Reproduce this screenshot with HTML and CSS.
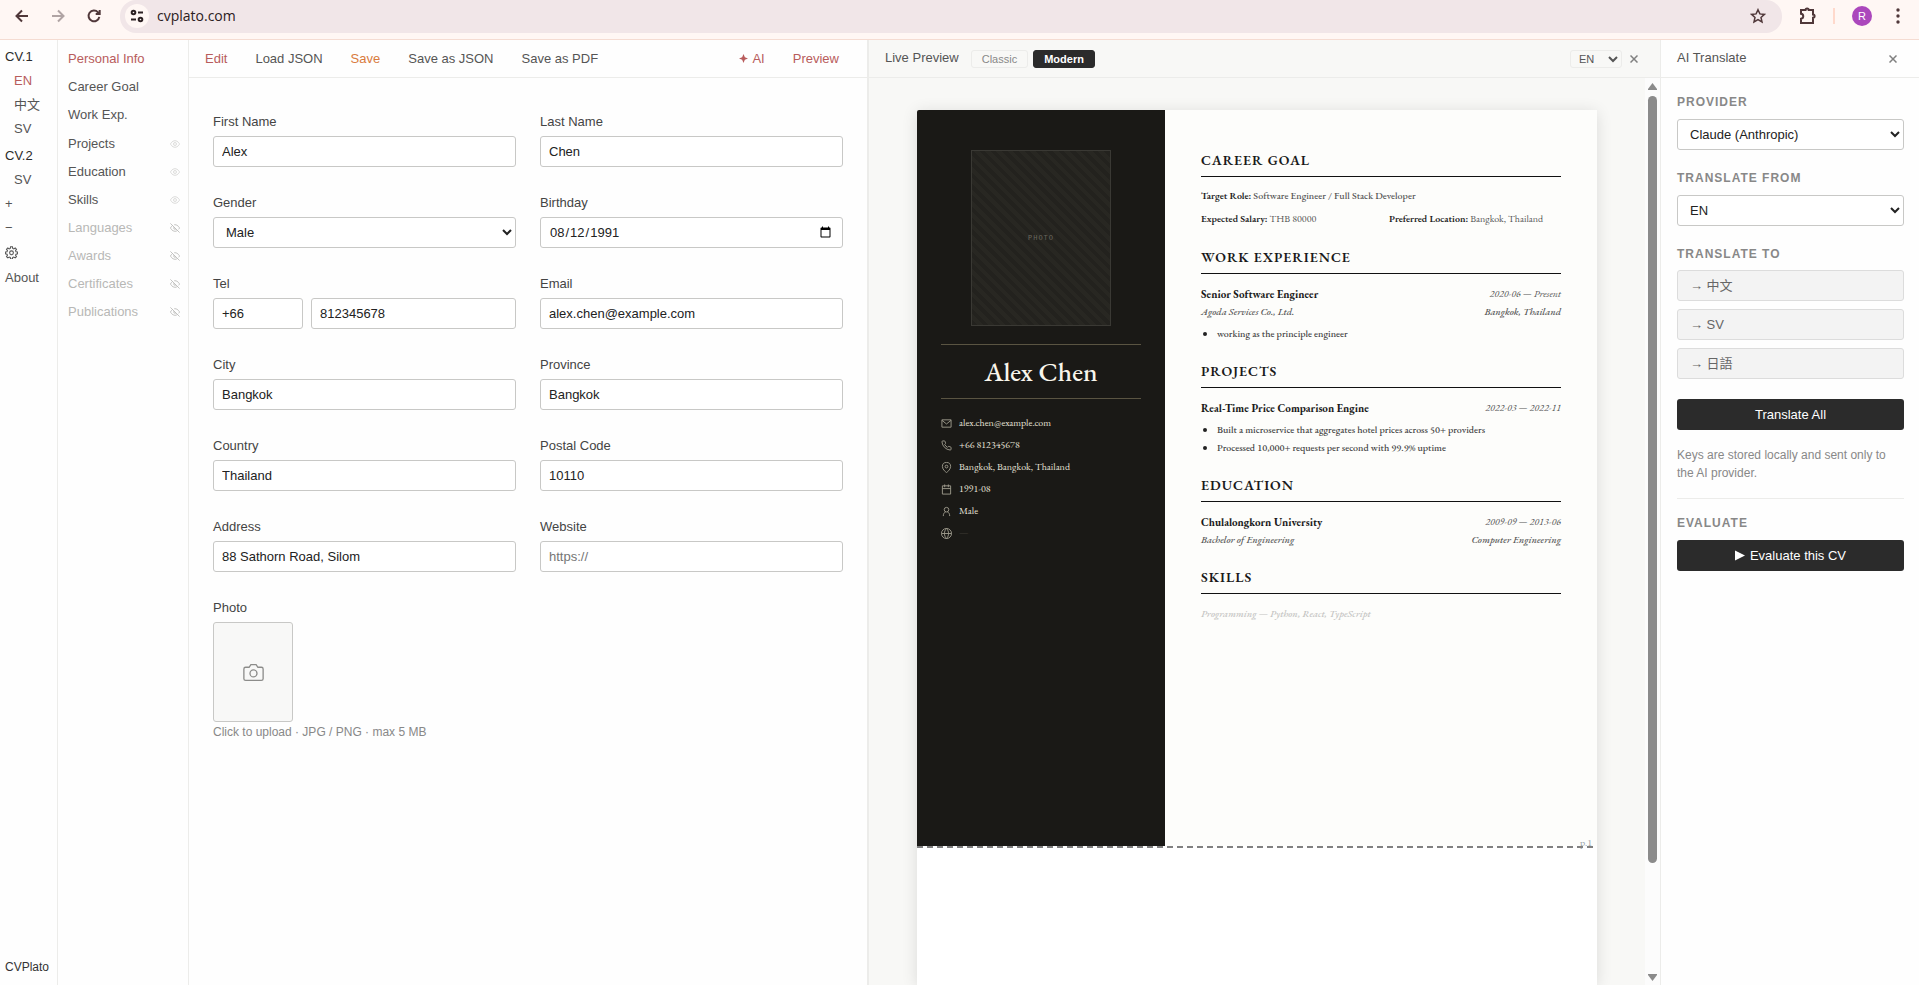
FILE: index.html
```html
<!DOCTYPE html>
<html lang="en">
<head>
<meta charset="utf-8">
<title>CVPlato</title>
<link rel="stylesheet" href="styles.css">
</head>
<body>
<svg width="0" height="0" class="defs" aria-hidden="true">
  <symbol id="eye" viewBox="0 0 24 24"><path d="M1 12s4-8 11-8 11 8 11 8-4 8-11 8S1 12 1 12z"/><circle cx="12" cy="12" r="3.5"/></symbol>
  <symbol id="eye-off" viewBox="0 0 24 24"><path d="M9.900 4.240A9.100 9.100 0 0 1 12 4c7 0 11 8 11 8a18.500 18.500 0 0 1-2.160 3.190M6.060 6.060A18.450 18.450 0 0 0 1 12s4 8 11 8a10.900 10.900 0 0 0 5.940-2.060M9.880 9.880a3 3 0 1 0 4.240 4.240M1 1l22 22"/></symbol>
</svg>

<header class="browser">
  <button class="nav-btn" aria-label="Back"><svg viewBox="0 0 16 16"><path d="M14 8H3M8 2.500 2.500 8 8 13.500"/></svg></button>
  <button class="nav-btn faded" aria-label="Forward"><svg viewBox="0 0 16 16"><path d="M2 8h11M8 2.500 13.500 8 8 13.500"/></svg></button>
  <button class="nav-btn" aria-label="Reload"><svg viewBox="0 0 16 16"><path d="M13.300 8.800A5.400 5.400 0 1 1 12 4.300l1.500 1.500M13.700 2v4h-4"/></svg></button>
  <div class="url-bar">
    <span class="site-info"><svg viewBox="0 0 16 16"><circle cx="4.500" cy="4.500" r="1.800"/><path d="M9 4.500h5M2 11.500h5"/><circle cx="11.500" cy="11.500" r="1.800"/></svg></span>
    <span class="url">cvplato.com</span>
    <svg class="star" viewBox="0 0 16 16"><path d="M8 1.700l1.900 4.200 4.500.500-3.400 3 1 4.500L8 11.600 4 13.900l1-4.500-3.400-3 4.500-.500z"/></svg>
  </div>
  <svg class="puzzle" viewBox="0 0 18 18"><path d="M2 3h4.500a1.600 1.600 0 0 1 3.200 0H14v4.500a1.600 1.600 0 0 1 0 3.200V16H2v-4.200c3-.500 3-4.600 0-5z"/></svg>
  <span class="sep"></span>
  <span class="avatar">R</span>
  <svg class="dots" viewBox="0 0 4 16"><circle cx="2" cy="2" r="1.700"/><circle cx="2" cy="8" r="1.700"/><circle cx="2" cy="14" r="1.700"/></svg>
</header>

<div class="app">
  <nav class="rail">
    <button class="cv">CV.1</button>
    <button class="lang active">EN</button>
    <button class="lang">中文</button>
    <button class="lang">SV</button>
    <button class="cv next">CV.2</button>
    <button class="lang">SV</button>
    <button>+</button>
    <button>−</button>
    <button aria-label="Settings"><svg class="gear" viewBox="0 0 24 24"><path d="M10.300 1.500h3.400l.6 3 1.900.8 2.600-1.700 2.400 2.400-1.700 2.600.8 1.900 3 .6v3.400l-3 .6-.8 1.900 1.700 2.600-2.400 2.400-2.600-1.700-1.900.8-.6 3h-3.400l-.6-3-1.900-.8-2.600 1.700-2.400-2.400 1.700-2.600-.8-1.900-3-.6v-3.400l3-.6.8-1.900-1.700-2.600 2.400-2.400 2.600 1.700 1.900-.8z"/><circle cx="12" cy="12.500" r="3.500"/></svg></button>
    <a href="#about" class="about">About</a>
    <span class="brand">CVPlato</span>
  </nav>

  <nav class="sections">
    <ul>
      <li class="active"><a href="#personal">Personal Info</a></li>
      <li><a href="#goal">Career Goal</a></li>
      <li><a href="#work">Work Exp.</a></li>
    </ul>
    <ul>
      <li><a href="#projects">Projects</a><svg><use href="#eye"/></svg></li>
      <li><a href="#education">Education</a><svg><use href="#eye"/></svg></li>
      <li><a href="#skills">Skills</a><svg><use href="#eye"/></svg></li>
      <li class="off"><a href="#languages">Languages</a><svg><use href="#eye-off"/></svg></li>
      <li class="off"><a href="#awards">Awards</a><svg><use href="#eye-off"/></svg></li>
      <li class="off"><a href="#certificates">Certificates</a><svg><use href="#eye-off"/></svg></li>
      <li class="off"><a href="#publications">Publications</a><svg><use href="#eye-off"/></svg></li>
    </ul>
  </nav>

  <main class="editor">
    <div class="toolbar">
      <button class="accent">Edit</button>
      <button>Load JSON</button>
      <button class="save">Save</button>
      <button>Save as JSON</button>
      <button>Save as PDF</button>
      <button class="accent ai"><svg viewBox="0 0 10 10"><path d="M5 0l1.500 3.500L10 5 6.500 6.500 5 10 3.500 6.500 0 5l3.500-1.500z"/></svg>AI</button>
      <button class="accent">Preview</button>
    </div>
    <form class="form">
      <div class="field"><label for="first">First Name</label><input id="first" type="text" value="Alex"></div>
      <div class="field"><label for="last">Last Name</label><input id="last" type="text" value="Chen"></div>
      <div class="field"><label for="gender">Gender</label><select id="gender"><option>Male</option></select></div>
      <div class="field"><label for="birthday">Birthday</label><input id="birthday" type="date" value="1991-08-12"></div>
      <div class="field"><label for="tel">Tel</label><div class="tel"><input type="text" class="code" aria-label="Country code" value="+66"><input id="tel" type="text" value="812345678"></div></div>
      <div class="field"><label for="email">Email</label><input id="email" type="text" value="alex.chen@example.com"></div>
      <div class="field"><label for="city">City</label><input id="city" type="text" value="Bangkok"></div>
      <div class="field"><label for="province">Province</label><input id="province" type="text" value="Bangkok"></div>
      <div class="field"><label for="country">Country</label><input id="country" type="text" value="Thailand"></div>
      <div class="field"><label for="postal">Postal Code</label><input id="postal" type="text" value="10110"></div>
      <div class="field"><label for="address">Address</label><input id="address" type="text" value="88 Sathorn Road, Silom"></div>
      <div class="field"><label for="website">Website</label><input id="website" type="text" placeholder="https://"></div>
      <div class="field"><label for="photo">Photo</label>
        <button type="button" id="photo" class="upload" aria-label="Upload photo"><svg viewBox="0 0 24 24"><path d="M23 19a2 2 0 0 1-2 2H3a2 2 0 0 1-2-2V8a2 2 0 0 1 2-2h4l2-3h6l2 3h4a2 2 0 0 1 2 2z"/><circle cx="12" cy="13" r="4"/></svg></button>
        <span class="hint">Click to upload · JPG / PNG · max 5 MB</span>
      </div>
    </form>
  </main>

  <section class="preview">
    <div class="panel-head">
      <span class="title">Live Preview</span>
      <button class="theme">Classic</button>
      <button class="theme on">Modern</button>
      <select class="mini" aria-label="Preview language"><option>EN</option></select>
      <button class="close" aria-label="Close preview"><svg viewBox="0 0 8 8"><path d="M.5.5l7 7M7.500.5l-7 7"/></svg></button>
    </div>
    <div class="stage">
      <div class="canvas">
        <article class="paper">
          <div class="page">
            <aside class="cv-side">
              <div class="photo">PHOTO</div>
              <h1>Alex Chen</h1>
              <ul class="contacts">
                <li><svg viewBox="0 0 24 24"><path d="M2 4h20v16H2zM2 5l10 8L22 5"/></svg>alex.chen@example.com</li>
                <li><svg viewBox="0 0 24 24"><path d="M22 16.900v3a2 2 0 0 1-2.200 2A19.800 19.800 0 0 1 2.100 4.200 2 2 0 0 1 4.100 2h3a2 2 0 0 1 2 1.700c.1 1 .4 1.900.7 2.800a2 2 0 0 1-.5 2.100L8.100 9.900a16 16 0 0 0 6 6l1.300-1.300a2 2 0 0 1 2.100-.4c.9.300 1.800.6 2.800.7a2 2 0 0 1 1.700 2z"/></svg>+66 812345678</li>
                <li><svg viewBox="0 0 24 24"><path d="M21 10c0 7-9 13-9 13s-9-6-9-13a9 9 0 0 1 18 0z"/><circle cx="12" cy="10" r="3"/></svg>Bangkok, Bangkok, Thailand</li>
                <li><svg viewBox="0 0 24 24"><path d="M3 4h18v18H3zM3 10h18M8 1v6M16 1v6"/></svg>1991-08</li>
                <li><svg viewBox="0 0 24 24"><circle cx="12" cy="8" r="5"/><path d="M5 22c0-5 2-8 5-9M19 22c0-5-2-8-5-9"/></svg>Male</li>
                <li class="empty"><svg viewBox="0 0 24 24"><circle cx="12" cy="12" r="11"/><path d="M1 12h22M12 1c6 6 6 16 0 22M12 1c-6 6-6 16 0 22"/></svg>—</li>
              </ul>
            </aside>
            <div class="cv-main">
              <section class="block">
                <h2>Career Goal</h2>
                <p class="goal"><b>Target Role:</b> Software Engineer / Full Stack Developer</p>
                <div class="pair"><span><b>Expected Salary:</b> THB 80000</span><span><b>Preferred Location:</b> Bangkok, Thailand</span></div>
              </section>
              <section class="block">
                <h2>Work Experience</h2>
                <div class="row"><h3>Senior Software Engineer</h3><em class="date">2020-06 — Present</em></div>
                <div class="row"><em>Agoda Services Co., Ltd.</em><em>Bangkok, Thailand</em></div>
                <ul><li>working as the principle engineer</li></ul>
              </section>
              <section class="block">
                <h2>Projects</h2>
                <div class="row"><h3>Real-Time Price Comparison Engine</h3><em class="date">2022-03 — 2022-11</em></div>
                <ul><li>Built a microservice that aggregates hotel prices across 50+ providers</li><li>Processed 10,000+ requests per second with 99.9% uptime</li></ul>
              </section>
              <section class="block">
                <h2>Education</h2>
                <div class="row"><h3>Chulalongkorn University</h3><em class="date">2009-09 — 2013-06</em></div>
                <div class="row"><em>Bachelor of Engineering</em><em>Computer Engineering</em></div>
              </section>
              <section class="block">
                <h2>Skills</h2>
                <div class="row ghost"><em>Programming — Python, React, TypeScript</em></div>
              </section>
            </div>
            <span class="page-no">p.1</span>
          </div>
        </article>
      </div>
      <div class="scroll" aria-hidden="true">
        <svg viewBox="0 0 9 7"><path d="M4.500 0L9 6v1H0V6z"/></svg>
        <div class="track"><div class="thumb"></div></div>
        <svg viewBox="0 0 9 7"><path d="M4.500 7L9 1V0H0v1z"/></svg>
      </div>
    </div>
  </section>

  <aside class="ai-panel">
    <div class="panel-head">
      <span class="title">AI Translate</span>
      <button class="close" aria-label="Close AI panel"><svg viewBox="0 0 8 8"><path d="M.5.5l7 7M7.500.5l-7 7"/></svg></button>
    </div>
    <div class="ai-body">
      <label class="cap" for="provider">PROVIDER</label>
      <select id="provider"><option>Claude (Anthropic)</option></select>
      <label class="cap" for="from">TRANSLATE FROM</label>
      <select id="from"><option>EN</option></select>
      <h4 class="cap to">TRANSLATE TO</h4>
      <div class="targets">
        <button>→ 中文</button>
        <button>→ SV</button>
        <button>→ 日語</button>
      </div>
      <button class="primary">Translate All</button>
      <p class="note">Keys are stored locally and sent only to the AI provider.</p>
      <h4 class="cap eval">EVALUATE</h4>
      <button class="primary"><svg viewBox="0 0 10 10"><path d="M0 0l10 5-10 5z"/></svg>Evaluate this CV</button>
    </div>
  </aside>
</div>
</body>
</html>
```
FILE: styles.css
```css
* { box-sizing: border-box; }
body {
  margin: 0;
  height: 100vh;
  display: flex;
  flex-direction: column;
  overflow: hidden;
  background: #fefefe;
  color: #555;
  font: 13px/16px "Liberation Sans", Arial, "Noto Sans CJK SC", sans-serif;
}
button, input, select { font: inherit; color: inherit; margin: 0; }
button { background: none; border: 0; padding: 0; text-align: left; white-space: nowrap; }
a { color: inherit; text-decoration: none; }
ul { list-style: none; margin: 0; padding: 0; }
h1, h2, h3, h4, p { margin: 0; }
svg { fill: none; stroke: currentColor; stroke-width: 2; flex: none; display: block; }
.defs { position: absolute; }

/* Browser bar */
.browser {
  flex: none;
  height: 40px;
  display: flex;
  align-items: center;
  padding: 0 12px 7px 14px;
  background: #fff7f4;
  border-bottom: 1px solid #f5dcd2;
  color: #50383a;
}
.nav-btn { width: 16px; margin-right: 20px; }
.nav-btn svg { width: 16px; height: 16px; }
.nav-btn.faded { color: #b0a4a4; }
.nav-btn + .url-bar { margin-left: -2px; }
.url-bar {
  flex: 1;
  height: 33px;
  display: flex;
  align-items: center;
  padding: 0 16px 0 5px;
  background: #f1e6e8;
  border-radius: 16px;
}
.site-info {
  width: 24px;
  height: 24px;
  border-radius: 50%;
  background: #fff7f4;
  display: flex;
  align-items: center;
  justify-content: center;
  color: #2b2022;
}
.site-info svg { width: 16px; height: 16px; }
.url { flex: 1; margin-left: 8px; color: #2b2022; font: 14px/20px "Open Sans", sans-serif; }
.star { width: 16px; height: 16px; stroke-width: 1.5; }
.puzzle { width: 18px; height: 18px; margin-left: 17px; }
.sep { width: 2px; height: 16px; margin-left: 16px; background: #ffd9cc; }
.avatar {
  width: 20px;
  height: 20px;
  margin: 0 24px 0 17px;
  border-radius: 50%;
  background: #ab47bc;
  color: #fff;
  font-size: 11px;
  line-height: 20px;
  text-align: center;
}
.dots { width: 4px; height: 16px; fill: currentColor; stroke: none; }
.browser .dots { margin-right: 7px; }

/* App columns */
.app { flex: 1; min-height: 0; display: grid; grid-template-columns: 58px 131px 678fr 793fr 259px; }

.rail { display: flex; flex-direction: column; align-items: flex-start; padding: 5px 0 6px 5px; border-right: 1px solid #ececea; }
.rail button, .rail a { height: 24px; line-height: 24px; }
.rail .cv { color: #2b2b2b; }
.rail .next { margin-top: 3px; }
.rail .lang { padding-left: 9px; }
.rail .lang.active { color: #b85c5c; }
.rail .gear { width: 13px; height: 13px; }
.rail .about { margin-top: 2px; }
.brand { margin-top: auto; font-size: 12px; line-height: 24px; color: #333; }

.sections { padding: 5px 8px 0 10px; border-right: 1px solid #ececea; }
.sections li { display: flex; align-items: center; justify-content: space-between; height: 28px; }
.sections ul + ul { margin-top: 1px; }
.sections svg { width: 10px; height: 10px; color: #d4d4d2; }
.sections .active { color: #b85c5c; }
.sections .off { color: #b8b8b6; }
.sections .off svg { color: #b8b8b6; }

/* Editor */
.editor { min-width: 0; }
.toolbar { display: flex; align-items: center; gap: 28px; height: 38px; padding: 0 28px 0 16px; border-bottom: 1px solid #ececea; }
.accent { color: #b85c5c; }
.save { color: #d97b3d; }
.toolbar .ai { display: flex; align-items: center; gap: 4px; margin-left: auto; }
.toolbar .ai svg { width: 9px; height: 9px; fill: currentColor; stroke: none; }
.form { display: grid; grid-template-columns: 1fr 1fr; gap: 28px 24px; padding: 36px 24px; }
.field { display: flex; flex-direction: column; min-width: 0; color: #444; }
.field label { margin-bottom: 6px; }
input, select {
  width: 100%;
  min-width: 0;
  height: 31px;
  padding: 0 8px;
  border: 1px solid #c8c8c6;
  border-radius: 3px;
  background: #fff;
  color: #222;
}
select { padding-right: 0; }
input::placeholder { color: #757575; }
.tel { display: flex; gap: 8px; }
.tel .code { flex: none; width: 90px; }
.upload {
  width: 80px;
  height: 100px;
  display: flex;
  align-items: center;
  justify-content: center;
  border: 1px solid #c8c8c6;
  border-radius: 3px;
  background: #f8f8f7;
  color: #8c8c8a;
}
.upload svg { width: 21px; height: 21px; stroke-width: 1.5; }
.hint { margin-top: 2px; font-size: 12px; color: #888; }

/* Preview */
.preview { min-width: 0; display: flex; flex-direction: column; background: #f8f8f6; border-left: 2px solid #ececea; }
.panel-head { flex: none; display: flex; align-items: center; height: 38px; padding: 0 22px 0 16px; border-bottom: 1px solid #ececea; }
.title { margin-bottom: 2px; margin-right: auto; }
.preview .title { margin-right: 12px; }
.theme { height: 18px; margin-right: 5px; padding: 0 10px; border: 1px solid #ececea; border-radius: 3px; font-size: 11px; line-height: 16px; color: #888; }
.theme.on { background: #2b2b2b; border-color: #2b2b2b; color: #fff; font-weight: bold; }
.mini { width: 52px; height: 18px; margin-left: auto; padding: 0 0 0 4px; border-color: #ececea; background: none; font-size: 11px; color: #555; }
.close { width: 8px; margin-left: 8px; color: #808080; }
.close svg { width: 8px; height: 8px; stroke-width: 1.5; }
.stage { flex: 1; min-height: 0; display: flex; }
.canvas { flex: 1; min-width: 0; padding: 32px 48px 0; overflow: hidden; }
.paper {
  height: 100%;
  background: #fff;
  border-radius: 2px 2px 0 0;
  box-shadow: 0 2px 16px rgba(0, 0, 0, .12);
  font-family: "EB Garamond", "Liberation Serif", "Times New Roman", serif;
}
.page { position: relative; display: flex; min-height: 736px; background: #fdfdfb; }
.page::after {
  content: "";
  position: absolute;
  left: 0;
  right: 0;
  bottom: -2px;
  height: 2px;
  background: repeating-linear-gradient(90deg, #808080 0 6px, transparent 6px 10px);
}
.page-no { position: absolute; right: 5px; bottom: -3px; font-size: 10px; line-height: 12px; color: #9aa4aa; }
.cv-side { flex: none; width: 248px; padding: 40px 24px; background: #1a1916; border-radius: 2px 0 0 0; color: #e6e2d8; }
.photo {
  width: 140px;
  height: 176px;
  margin: 0 auto 18px;
  display: flex;
  align-items: center;
  justify-content: center;
  border: 1px solid #3a3934;
  background: repeating-linear-gradient(45deg, #23221e 0 4px, #282722 4px 8px);
  color: #6a675e;
  font: 7px/10px "Liberation Mono", monospace;
  letter-spacing: 1px;
}
.cv-side h1 {
  padding: 10px 0;
  border-top: 1px solid #5a5442;
  border-bottom: 1px solid #5a5442;
  color: #f8f5ec;
  font-size: 27px;
  font-weight: 500;
  line-height: 33px;
  text-align: center;
}
.contacts { margin-top: 13px; font-size: 10px; }
.contacts li { display: flex; align-items: center; gap: 7px; height: 22px; }
.contacts svg { width: 11px; height: 11px; color: #a09c8e; }
.contacts .empty { color: #3c3a33; }
.cv-main { flex: 1; min-width: 0; padding: 40px 36px; font-size: 10px; font-weight: 500; color: #555; }
.block { margin-bottom: 18px; }
.block h2 { margin-bottom: 11px; padding-bottom: 5px; border-bottom: 1px solid #111; color: #1a1a1a; font-size: 14px; font-weight: 600; line-height: 21px; letter-spacing: 1px; text-transform: uppercase; }
.block b { font-weight: 600; color: #222; }
.goal { line-height: 16px; }
.pair { display: grid; grid-template-columns: 1fr 1fr; gap: 16px; margin-top: 6px; padding-bottom: 1px; font-weight: 400; line-height: 18px; }
.row { display: flex; justify-content: space-between; line-height: 18px; }
.row h3 { font-size: 11px; font-weight: bold; line-height: 18px; color: #1a1a1a; }
.row .date { font-weight: 400; }
.block ul { margin-top: 4px; }
.block li { display: flex; align-items: center; line-height: 18px; color: #444; }
.block li::before { content: ""; flex: none; width: 4px; height: 4px; margin: 0 10px 0 2px; border-radius: 50%; background: #222; }
.ghost { color: #c4c4c2; }

.scroll { flex: none; width: 15px; display: flex; flex-direction: column; align-items: center; gap: 6px; padding: 5px 0 4px; background: #fcfcfc; }
.scroll svg { width: 9px; height: 7px; fill: #8b8b8b; stroke: none; }
.track { flex: 1; width: 9px; }
.thumb { height: 88%; border-radius: 5px; background: #8b8b8b; }

/* AI panel */
.ai-panel { border-left: 1px solid #ececea; background: #fefefe; }
.ai-body { display: flex; flex-direction: column; padding: 16px 15px 0 16px; }
.cap { margin: 0 0 9px; color: #888; font-size: 12px; font-weight: bold; line-height: 16px; letter-spacing: 1px; }
.ai-body select + .cap { margin-top: 20px; }
.ai-body .to { margin-bottom: 8px; }
.targets { display: flex; flex-direction: column; gap: 8px; }
.targets button { height: 31px; padding: 0 12px; border: 1px solid #dcdcdc; border-radius: 3px; background: #f3f3f3; color: #666; }
.primary { display: flex; align-items: center; justify-content: center; gap: 5px; height: 31px; border-radius: 3px; background: #2b2b2b; color: #fff; }
.primary svg { width: 10px; height: 11px; fill: currentColor; stroke: none; }
.targets + .primary { margin-top: 20px; }
.note { margin: 16px 0; color: #888; font-size: 12px; line-height: 18px; }
.eval { padding-top: 16px; border-top: 1px solid #ececea; }
```
